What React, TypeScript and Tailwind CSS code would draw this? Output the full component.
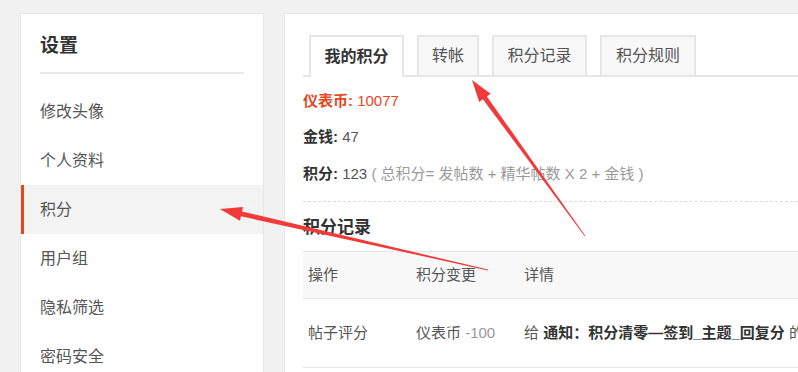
import React from 'react';

const font = { fontFamily: '"Liberation Sans", "Noto Sans CJK SC", sans-serif' };

const menu = ['修改头像', '个人资料', '积分', '用户组', '隐私筛选', '密码安全'];
const tabs = [
  { label: '我的积分', w: 'w-[95px]' },
  { label: '转帐', w: 'w-[62px]' },
  { label: '积分记录', w: 'w-[95px]' },
  { label: '积分规则', w: 'w-[96px]' },
];

// tapered red arrow, as drawn on a screenshot
const arrowPoints = (tx: number, ty: number, hx: number, hy: number) => {
  const dx = hx - tx;
  const dy = hy - ty;
  const len = Math.hypot(dx, dy);
  const ux = dx / len;
  const uy = dy / len;
  const nx = -uy;
  const ny = ux;
  const bx = hx - 22 * ux;
  const by = hy - 22 * uy;
  const p = (x: number, y: number) => `${x.toFixed(1)},${y.toFixed(1)}`;
  return [
    p(hx, hy),
    p(bx + 7 * nx, by + 7 * ny),
    p(bx + 2.5 * nx, by + 2.5 * ny),
    p(tx + 0.4 * nx, ty + 0.4 * ny),
    p(tx - 0.4 * nx, ty - 0.4 * ny),
    p(bx - 2.5 * nx, by - 2.5 * ny),
    p(bx - 7 * nx, by - 7 * ny),
  ].join(' ');
};

const App: React.FC = () => {
  return (
    <div className="relative w-[798px] h-[372px] overflow-hidden bg-[#f1f1f1]" style={font}>
      <div className="flex gap-[20px] pl-[20px] pt-[13px]">
        {/* sidebar */}
        <aside className="w-[244px] h-[400px] shrink-0 bg-white border border-[#e6e6e6]">
          <div className="px-[19px] pt-[19px]">
            <h2 className="text-[19px] leading-[26px] font-bold text-[#333]">设置</h2>
            <div className="mt-[13px] h-[2px] bg-[#e8e8e8]" />
          </div>
          <ul className="mt-[13px]">
            {menu.map((m) => (
              <li
                key={m}
                className={
                  m === '积分'
                    ? 'h-[49px] flex items-center pl-[16px] border-l-[3px] border-[#e8461d] bg-[#f3f3f3] text-[16px] text-[#555]'
                    : 'h-[49px] flex items-center pl-[19px] text-[16px] text-[#555]'
                }
              >
                {m}
              </li>
            ))}
          </ul>
        </aside>

        {/* main panel */}
        <main className="w-[560px] h-[400px] shrink-0 bg-white border border-[#e6e6e6] pl-[18px] pt-[21px]">
          <div className="flex items-end gap-[13px] pl-[6px] border-b-2 border-[#e6e6e6] h-[42px]">
            {tabs.map((t, i) => (
              <div
                key={t.label}
                className={
                  i === 0
                    ? `${t.w} h-[42px] -mb-[2px] flex items-center justify-center bg-white border-2 border-b-0 border-[#e6e6e6] text-[16px] font-bold text-[#333]`
                    : `${t.w} h-[40px] flex items-center justify-center bg-[#f8f8f8] border-2 border-b-0 border-[#e6e6e6] text-[16px] text-[#555]`
                }
              >
                {t.label}
              </div>
            ))}
          </div>

          <div className="text-[15px] leading-[20px] text-[#555]">
            <p className="mt-[14px] text-[#e8461d]">
              <b>仪表币:</b> 10077
            </p>
            <p className="mt-[16px]">
              <b className="text-[#333]">金钱:</b> 47
            </p>
            <p className="mt-[17px]">
              <b className="text-[#333]">积分:</b> 123{' '}
              <span className="text-[#999]">( 总积分= 发帖数 + 精华帖数 X 2 + 金钱 )</span>
            </p>
          </div>

          <div className="mt-[17px] border-t border-dashed border-[#dcdcdc]" />

          <h3 className="mt-[14px] text-[17px] leading-[24px] font-bold text-[#333]">积分记录</h3>

          <table className="mt-[11px] w-full text-[15px] text-[#555] border-collapse">
            <thead>
              <tr className="h-[47px] bg-[#f8f8f8] border-t border-b border-[#e6e6e6]">
                <th className="w-[108px] pl-[5px] text-left font-normal">操作</th>
                <th className="w-[108px] pl-[5px] text-left font-normal">积分变更</th>
                <th className="pl-[5px] text-left font-normal">详情</th>
              </tr>
            </thead>
            <tbody>
              <tr className="h-[69px] border-b border-[#e6e6e6]">
                <td className="pl-[5px]">帖子评分</td>
                <td className="pl-[5px]">
                  仪表币 <span className="text-[#999]">-100</span>
                </td>
                <td className="pl-[5px] whitespace-nowrap">
                  给 <b className="text-[#333]">通知：积分清零—签到_主题_回复分</b> 的
                </td>
              </tr>
            </tbody>
          </table>
        </main>
      </div>

      {/* annotation arrows */}
      <svg className="absolute inset-0 pointer-events-none" width="798" height="372">
        <polygon points={arrowPoints(488, 270, 220, 209)} fill="#f23a3a" />
        <polygon points={arrowPoints(585, 236, 472, 80)} fill="#f23a3a" />
      </svg>
    </div>
  );
};

export default App;
